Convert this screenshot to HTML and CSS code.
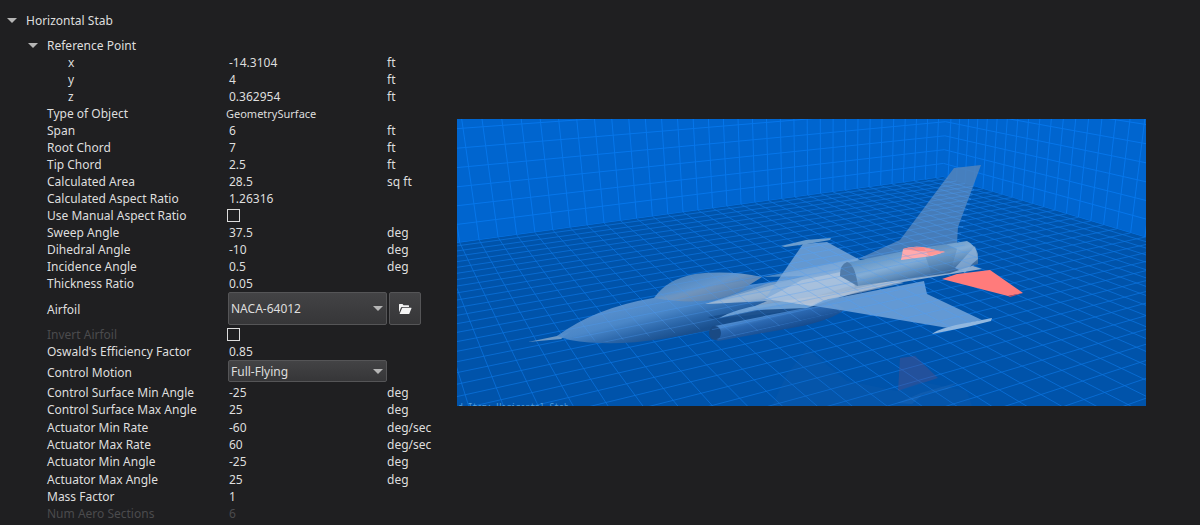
FILE: index.html
```html
<!DOCTYPE html>
<html lang="en">
<head>
<meta charset="utf-8">
<title>Horizontal Stab</title>
<link rel="stylesheet" href="styles.css">
</head>
<body>
<main class="editor">
  <section class="tree">
    <button class="node node--root" type="button" aria-expanded="true"><span class="caret"></span>Horizontal Stab</button>
    <button class="node node--child" type="button" aria-expanded="true"><span class="caret"></span>Reference Point</button>
    <div class="fields">
      <div class="row row--nested"><span class="name">x</span><span class="value">-14.3104</span><span class="unit">ft</span></div>
      <div class="row row--nested"><span class="name">y</span><span class="value">4</span><span class="unit">ft</span></div>
      <div class="row row--nested"><span class="name">z</span><span class="value">0.362954</span><span class="unit">ft</span></div>
      <div class="row"><span class="name">Type of Object</span><span class="value value--type">GeometrySurface</span></div>
      <div class="row"><span class="name">Span</span><span class="value">6</span><span class="unit">ft</span></div>
      <div class="row"><span class="name">Root Chord</span><span class="value">7</span><span class="unit">ft</span></div>
      <div class="row"><span class="name">Tip Chord</span><span class="value">2.5</span><span class="unit">ft</span></div>
      <div class="row"><span class="name">Calculated Area</span><span class="value">28.5</span><span class="unit">sq ft</span></div>
      <div class="row"><span class="name">Calculated Aspect Ratio</span><span class="value">1.26316</span></div>
      <div class="row"><label class="name" for="manual">Use Manual Aspect Ratio</label><input class="check" id="manual" type="checkbox"></div>
      <div class="row"><span class="name">Sweep Angle</span><span class="value">37.5</span><span class="unit">deg</span></div>
      <div class="row"><span class="name">Dihedral Angle</span><span class="value">-10</span><span class="unit">deg</span></div>
      <div class="row"><span class="name">Incidence Angle</span><span class="value">0.5</span><span class="unit">deg</span></div>
      <div class="row"><span class="name">Thickness Ratio</span><span class="value">0.05</span></div>
      <div class="row row--tall">
        <label class="name" for="airfoil">Airfoil</label>
        <span class="combo"><select id="airfoil"><option>NACA-64012</option></select><span class="caret combo__caret"></span></span>
        <button class="open" type="button" aria-label="Open airfoil file">
          <svg viewBox="0 0 14 12" width="14" height="12" aria-hidden="true"><path d="M1 9.500V1.500Q1 1 1.500 1H4.500L5.500 2.200H10.500Q11 2.200 11 2.800V4H4Q3.300 4 3 4.600Z" fill="#f4f4f4"/><path d="M1.600 11L4 5.200Q4.100 4.800 4.600 4.800H13.200Q13.700 4.800 13.500 5.300L11.400 10.500Q11.200 11 10.700 11Z" fill="#f4f4f4"/></svg>
        </button>
      </div>
      <div class="row"><label class="name name--off" for="invert">Invert Airfoil</label><input class="check" id="invert" type="checkbox"></div>
      <div class="row"><span class="name">Oswald's Efficiency Factor</span><span class="value">0.85</span></div>
      <div class="row row--combo">
        <label class="name" for="motion">Control Motion</label>
        <span class="combo"><select id="motion"><option>Full-Flying</option></select><span class="caret combo__caret"></span></span>
      </div>
    </div>
    <div class="fields fields--actuation">
      <div class="row"><span class="name">Control Surface Min Angle</span><span class="value">-25</span><span class="unit">deg</span></div>
      <div class="row"><span class="name">Control Surface Max Angle</span><span class="value">25</span><span class="unit">deg</span></div>
      <div class="row"><span class="name">Actuator Min Rate</span><span class="value">-60</span><span class="unit">deg/sec</span></div>
      <div class="row"><span class="name">Actuator Max Rate</span><span class="value">60</span><span class="unit">deg/sec</span></div>
      <div class="row"><span class="name">Actuator Min Angle</span><span class="value">-25</span><span class="unit">deg</span></div>
      <div class="row"><span class="name">Actuator Max Angle</span><span class="value">25</span><span class="unit">deg</span></div>
      <div class="row"><span class="name">Mass Factor</span><span class="value">1</span></div>
      <div class="row row--off"><span class="name">Num Aero Sections</span><span class="value">6</span></div>
    </div>
  </section>
  <section class="preview">
    <svg class="scene" viewBox="0 0 689 287" role="img" aria-label="Aircraft model with the horizontal stabilizer highlighted">
      <defs>
        <linearGradient id="body" gradientUnits="userSpaceOnUse" x1="190" y1="178" x2="202" y2="222"><stop offset="0" stop-color="#5f94cf"/><stop offset=".4" stop-color="#4f8aca"/><stop offset=".72" stop-color="#2e68aa"/><stop offset="1" stop-color="#1b4f8c"/></linearGradient>
        <linearGradient id="glass" gradientUnits="userSpaceOnUse" x1="240" y1="155" x2="250" y2="184"><stop offset="0" stop-color="#5388c0"/><stop offset=".45" stop-color="#6496cc"/><stop offset=".55" stop-color="#6b93c0"/><stop offset="1" stop-color="#4777ae"/></linearGradient>
        <linearGradient id="tube" gradientUnits="userSpaceOnUse" x1="452" y1="129" x2="461" y2="163"><stop offset="0" stop-color="#6295c6"/><stop offset=".4" stop-color="#83add6"/><stop offset=".7" stop-color="#5e8bb9"/><stop offset="1" stop-color="#315e92"/></linearGradient>
        <linearGradient id="pod" gradientUnits="userSpaceOnUse" x1="318" y1="194" x2="323" y2="214"><stop offset="0" stop-color="#4b88cc"/><stop offset=".25" stop-color="#2b68b1"/><stop offset="1" stop-color="#14488a"/></linearGradient>
        <linearGradient id="mid" gradientUnits="userSpaceOnUse" x1="340" y1="150" x2="350" y2="194"><stop offset="0" stop-color="#528dc8"/><stop offset=".35" stop-color="#a4bfdc"/><stop offset=".65" stop-color="#87a5c7"/><stop offset="1" stop-color="#356ead"/></linearGradient>
      </defs>
      <rect width="689" height="287" fill="#0065cf"/>
      <path id="walls" class="grid-wall"/>
      <path id="ground" fill="#0053aa"/>
      <path id="floor" class="grid-floor"/>

      <g opacity=".35">
        <path d="M443 239L458 237L481 259L441 272Z" fill="#654e83"/>
        <path d="M330 255L350 230L390 262L440 272L465 263L510 272L515 287H315Z" fill="#1e60ac" opacity=".5"/>
        <path d="M440 284L464 274L502 263L490 270L465 276L455 285Z" fill="#3f7cc4" opacity=".6"/>
      </g>

      <path d="M401 140L443 121L497 49L524 46L501 108L500 124L440 140Z" fill="#5184bb" fill-opacity=".86"/>
      <path d="M71 223L100 217L113 213L104 220Z" fill="#6b97c5"/>
      <path d="M100 217Q138 189 196 179L240 172L340 160L470 134L506 146L440 164L340 193Q250 213 205 220Q153 228 113 221Z" fill="url(#body)" fill-opacity=".94"/>
      <path d="M197 179Q210 160 238 155Q272 151 305 158L281 173Q250 188 197 179Z" fill="url(#glass)"/>
      <path d="M197 179Q245 170 305 158L281 173Q250 188 197 179Z" fill="#7794b5" fill-opacity=".4"/>
      <path d="M305 158L348 150L401 139L397 173L350 190L270 199L310 182L248 185L322 164L348 157Z" fill="url(#mid)" fill-opacity=".88"/>
      <path d="M248 185L312 164L400 150V161L315 178L270 184Z" fill="#a0b5cf" fill-opacity=".45"/>
      <path d="M251 198L320 186L380 180L355 192L275 208Z" fill="#174d8b" fill-opacity=".9"/>
      <path d="M258 207L348 189L380 185L388 190Q376 201 340 208L261 222Q251 219 258 207Z" fill="url(#pod)"/>
      <ellipse cx="258" cy="214" rx="6" ry="7" fill="#1a4a84"/>
      <path d="M262 199Q285 187 325 183L397 174L350 189L300 191Z" fill="#76a7da" fill-opacity=".9"/>

      <path d="M308 180L346 125L370 123L405 142L398 166L356 187Z" fill="#83aedb" fill-opacity=".76"/>
      <path d="M308 180L345 161L398 150L401 166L356 187Z" fill="#c5d2e2" fill-opacity=".5"/>
      <path d="M324 127L349 121L374 119L373 121L350 125L328 128Z" fill="#6c9dcd"/>
      <path d="M340 183L390 168L510 145L525 150L440 164L350 185Z" fill="#9db6d1" fill-opacity=".9"/>
      <path d="M324 182L356 187Q364 181 380 179L467 162L470 175L525 201L491 209L383 191Z" fill="#71a3da" fill-opacity=".88"/>
      <path d="M325 182L354 187Q360 181 378 179L447 164L437 161L380 174Z" fill="#bdc9d8" fill-opacity=".55"/>
      <path d="M475 215Q479 211 499 206L535 199L534 202L510 208Z" fill="#91b7df"/>
      <path d="M383 157L389 144L452 131L510 122Q518 126 521 135V145L493 154L400 167Z" fill="url(#tube)"/>
      <path d="M383 157Q383 145 390 143Q398 145 401 167Z" fill="#507baa"/>
      <path d="M466 130L489 125L500 130L493 154L475 156Z" fill="#426f9f" fill-opacity=".28"/>
      <path d="M518 127L498 149L508 154L515 145L521 140Z" fill="#8eb2d8" fill-opacity=".75"/>
      <path d="M444 141L446 130Q458 126 470 129L488 133L475 137Z" fill="#ffaaae"/>
      <path d="M446 130Q458 126 470 129L488 133L460 132Z" fill="#fb8988"/>
      <path d="M467 129L488 133L472 137Z" fill="#ff9896"/>
      <path d="M485 160L500 155L533 151L566 174L551 177Z" fill="#ff7b7b"/>
      <path d="M551 177L566 174L553 178Z" fill="#c94d5b"/>
      <clipPath id="hull"><path d="M100 217L150 188L197 178L213 162L260 153L325 155L346 125L374 122L402 139L443 121L497 49L524 46L502 122L521 136L516 149L467 164L472 176L525 201L491 209L385 192L261 221L254 209L150 223Z"/></clipPath>
      <g clip-path="url(#hull)"><path id="overlay" class="grid-over"/></g>
      <text class="hud" x="1" y="291">d Item: Horizontal Stab</text>
    </svg>
  </section>
</main>
<script src="scene.js"></script>
</body>
</html>
```
FILE: styles.css
```css
body {
  margin: 0;
  background: #1f1f21;
  color: #dedede;
  font: 12px/17px "Noto Sans", "Open Sans", sans-serif;
}
.editor {
  display: grid;
  grid-template-columns: 457px 1fr;
  min-height: 100vh;
}
.tree { padding-top: 11px; }
.node {
  display: flex;
  align-items: center;
  gap: 9px;
  border: 0;
  padding: 0;
  background: none;
  color: inherit;
  font: inherit;
}
.node--root { margin: 0 0 7px 7px; height: 18px; }
.node--child { margin-left: 28px; height: 18px; }
.caret {
  width: 0;
  height: 0;
  border: 5px solid transparent;
  border-top: 5px solid #b5b5b5;
  border-bottom: 0;
}
.row {
  display: grid;
  grid-template-columns: 179px 161px 1fr;
  align-items: center;
  height: 17px;
  padding-left: 47px;
}
.row--nested { padding-left: 68px; grid-template-columns: 158px 161px 1fr; }
.row--tall { height: 34px; }
.row--combo { height: 24px; }
.fields--actuation .row:nth-child(3n) { height: 18px; }
.value { padding-left: 3px; }
.value--type { padding-left: 0; font-size: 11px; }
.row--off, .name--off { color: #4b4b4d; }
.check {
  appearance: none;
  width: 13px;
  height: 13px;
  margin: 0 0 0 1px;
  border: 1px solid #dcdcdc;
}
.combo {
  position: relative;
  height: 100%;
  padding: 0 0 2px 2px;
  box-sizing: border-box;
  width: 161px;
}
.row--tall .combo { padding-bottom: 1px; }
.combo select {
  appearance: none;
  box-sizing: border-box;
  width: 100%;
  height: 100%;
  padding: 0 20px 0 2px;
  border: 1px solid #555557;
  border-radius: 2px;
  background: linear-gradient(#434345, #363638);
  color: inherit;
  font: inherit;
}
.combo__caret {
  position: absolute;
  right: 4px;
  top: 50%;
  margin-top: -3px;
  pointer-events: none;
}
.open {
  display: grid;
  place-items: center;
  width: 32px;
  height: 33px;
  margin: 0 0 1px 2px;
  padding: 0;
  border: 1px solid #555557;
  border-radius: 2px;
  background: linear-gradient(#434345, #363638);
}
.preview { padding: 119px 54px 0 0; }
.scene { display: block; width: 100%; }
.grid-wall { fill: none; stroke: #0676ea; stroke-width: 1; }
.grid-floor { fill: none; stroke: #0b73de; stroke-opacity: .75; stroke-width: 1; }
.grid-over { fill: none; stroke: #4b9cf5; stroke-opacity: .3; stroke-width: 1; }
.hud { fill: #4f9fe0; font: 8px "DejaVu Sans Mono", monospace; }
```
FILE: scene.js
```js
// Room grid in perspective: homogeneous offsets from the far corner, one per cell.
const origin = [486, 58];
const left = { v: [1806, -121], s: 0.00796, f: 0.67 };
const right = { v: [-115, -121], s: 0.01351, f: 0.61 };
const up = { v: [370, 2538], s: 0.00545 };

function project(i, j, k) {
  const a = i * left.s, b = j * right.s, c = k * up.s;
  const w = 1 - a - b - c;
  const at = n => (origin[n] - a * left.v[n] - b * right.v[n] - c * up.v[n]) / w;
  return at(0).toFixed(1) + " " + at(1).toFixed(1);
}
const line = (p, q) => "M" + project(...p) + "L" + project(...q);

let walls = "", floor = "";
for (let n = 0; n < 40; n++) {
  walls += line([n + left.f, 0, 0], [n + left.f, 0, 9]);
  walls += line([0, n + right.f, 0], [0, n + right.f, 9]);
}
for (let k = 0; k < 9; k++) {
  walls += line([0, 0, k], [40, 0, k]) + line([0, 0, k], [0, 40, k]);
}
for (let n = 0; n < 100; n++) {
  const i = n + left.f, j = n + right.f;
  const farJ = (0.85 - i * left.s) / right.s;
  const farI = (0.85 - j * right.s) / left.s;
  if (farJ > 0) floor += line([i, 0, 0], [i, farJ, 0]);
  if (farI > 0) floor += line([0, j, 0], [farI, j, 0]);
}
const set = (id, d) => document.getElementById(id).setAttribute("d", d);
set("walls", walls);
set("ground", "M" + project(0, 0, 0) + "L" + project(40, 0, 0) + "L-50 400L800 400L" + project(0, 40, 0) + "Z");
set("floor", floor);
set("overlay", floor);
```
